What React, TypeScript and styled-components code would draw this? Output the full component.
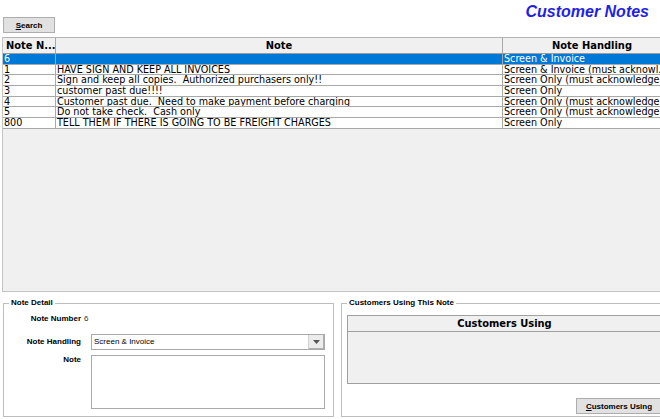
import React from "react";
import styled, { createGlobalStyle } from "styled-components";

type Note = {
  num: string;
  text: string;
  handling: string;
};

const notes: Note[] = [
  { num: "6", text: "", handling: "Screen & Invoice" },
  { num: "1", text: "HAVE SIGN AND KEEP ALL INVOICES", handling: "Screen & Invoice (must acknowl." },
  { num: "2", text: "Sign and keep all copies.  Authorized purchasers only!!", handling: "Screen Only (must acknowledge)" },
  { num: "3", text: "customer past due!!!!", handling: "Screen Only" },
  { num: "4", text: "Customer past due.  Need to make payment before charging", handling: "Screen Only (must acknowledge)" },
  { num: "5", text: "Do not take check.  Cash only", handling: "Screen Only (must acknowledge)" },
  { num: "800", text: "TELL THEM IF THERE IS GOING TO BE FREIGHT CHARGES", handling: "Screen Only" },
];

const GlobalStyle = createGlobalStyle`
  html, body {
    margin: 0;
    padding: 0;
    background: #ffffff;
  }
  body {
    font-family: "Liberation Sans", Arial, sans-serif;
  }
`;

const Screen = styled.div`
  width: 660px;
  height: 419px;
  overflow: hidden;
  background: #ffffff;
  display: flex;
  flex-direction: column;
`;

const TopBar = styled.div`
  display: flex;
  justify-content: space-between;
  align-items: flex-start;
  height: 37px;
  flex-shrink: 0;
`;

const ActionButton = styled.button<{ $width: number }>`
  width: ${(p) => p.$width}px;
  height: 16px;
  padding: 0;
  background: #e1e1e1;
  border: 1px solid #adadad;
  font: bold 8px "Liberation Sans", Arial, sans-serif;
  color: #000;
  flex-shrink: 0;
`;

const SearchButton = styled(ActionButton)`
  margin: 17px 0 0 3px;
`;

const Title = styled.div`
  margin: 3px 11px 0 0;
  font: italic bold 16px "Liberation Sans", Arial, sans-serif;
  color: #1f1fe8;
`;

const Grid = styled.div`
  margin-left: 2px;
  width: 680px;
  height: 255px;
  flex-shrink: 0;
  background: #f0f0f0;
  border-left: 1px solid #c4c4c4;
  border-bottom: 1px solid #c4c4c4;
  box-sizing: border-box;
  overflow: hidden;
`;

const columns = "53px 447px 1fr";

const HeaderRow = styled.div`
  display: grid;
  grid-template-columns: ${columns};
  height: 17px;
  box-sizing: border-box;
  border-top: 1px solid #b4b4b4;
  border-bottom: 1px solid #9c9c9c;
  background: #f0f0f0;
`;

const HeaderCell = styled.div<{ $align?: string }>`
  font: bold 11px "DejaVu Sans Condensed", "DejaVu Sans", sans-serif;
  line-height: 15px;
  text-align: ${(p) => p.$align || "center"};
  padding-left: ${(p) => (p.$align === "left" ? "3px" : "0")};
  border-right: 1px solid #a8a8a8;
  white-space: nowrap;
  overflow: hidden;
  color: #000;
`;

const Row = styled.div<{ $selected?: boolean }>`
  display: grid;
  grid-template-columns: ${columns};
  height: 10.7px;
  box-sizing: border-box;
  background: ${(p) => (p.$selected ? "#0078d7" : "#ffffff")};
  color: ${(p) => (p.$selected ? "#ffffff" : "#000000")};
  border-bottom: 1px solid #a8a8a8;
`;

const Cell = styled.div`
  font: 10.7px "DejaVu Sans Condensed", "DejaVu Sans", sans-serif;
  line-height: 10px;
  padding-left: 1px;
  border-right: 1px solid #a8a8a8;
  white-space: pre;
  overflow: hidden;
`;

const Panels = styled.div`
  display: flex;
  margin-top: 11px;
  height: 114px;
  flex-shrink: 0;
`;

const Panel = styled.div<{ $width: number; $left: number }>`
  position: relative;
  width: ${(p) => p.$width}px;
  margin-left: ${(p) => p.$left}px;
  box-sizing: border-box;
  border: 1px solid #bdbdbd;
  flex-shrink: 0;
  display: flex;
  flex-direction: column;
`;

const Legend = styled.span`
  position: absolute;
  top: -6px;
  left: 5px;
  padding: 0 2px;
  background: #ffffff;
  font: bold 8px "Liberation Sans", Arial, sans-serif;
  line-height: 10px;
  color: #000;
`;

const DetailForm = styled.div`
  display: flex;
  flex-direction: column;
  padding-top: 10px;
`;

const FormRow = styled.div<{ $height: number; $top: number; $center?: boolean }>`
  display: flex;
  align-items: ${(p) => (p.$center ? "center" : "flex-start")};
  gap: 10px;
  height: ${(p) => p.$height}px;
  margin-top: ${(p) => p.$top}px;
`;

const Label = styled.div`
  width: 77px;
  flex-shrink: 0;
  font: bold 8px "Liberation Sans", Arial, sans-serif;
  line-height: 10px;
  text-align: right;
  color: #000;
`;

const Value = styled.div`
  font: 8px "Liberation Sans", Arial, sans-serif;
  line-height: 10px;
  color: #333;
  margin-left: -7px;
`;

const Select = styled.div`
  display: flex;
  align-items: stretch;
  width: 234px;
  height: 16px;
  background: #ffffff;
  border: 1px solid #a9a9a9;
  box-sizing: border-box;
`;

const SelectText = styled.div`
  flex: 1;
  font: 8px "Liberation Sans", Arial, sans-serif;
  line-height: 14px;
  padding-left: 2px;
  color: #000;
`;

const SelectArrow = styled.div`
  width: 15px;
  background: #ececec;
  border-left: 1px solid #d0d0d0;
  box-shadow: inset -1px -1px 0 #b0b0b0;
  display: flex;
  align-items: center;
  justify-content: center;
`;

const TextArea = styled.div`
  width: 234px;
  height: 54px;
  background: #ffffff;
  border: 1px solid #a9a9a9;
  box-sizing: border-box;
`;

const CustomersBody = styled.div`
  display: flex;
  flex-direction: column;
  padding: 11px 5px 0 5px;
`;

const CustomersTable = styled.div`
  height: 69px;
  background: #f0f0f0;
  border: 1px solid #a0a0a0;
  box-sizing: border-box;
  display: flex;
  flex-direction: column;
`;

const CustomersHeader = styled.div`
  height: 16px;
  box-sizing: border-box;
  border-bottom: 1px solid #a0a0a0;
  font: bold 11px "DejaVu Sans Condensed", "DejaVu Sans", sans-serif;
  line-height: 15px;
  text-align: center;
  color: #000;
`;

const CustomersButton = styled(ActionButton)`
  align-self: flex-end;
  margin-top: 14px;
`;

const App = () => {
  return (
    <>
      <GlobalStyle />
      <Screen>
        <TopBar>
          <SearchButton $width={52}>
            <u>S</u>earch
          </SearchButton>
          <Title>Customer Notes</Title>
        </TopBar>

        <Grid>
          <HeaderRow>
            <HeaderCell $align="left">Note N...</HeaderCell>
            <HeaderCell>Note</HeaderCell>
            <HeaderCell>Note Handling</HeaderCell>
          </HeaderRow>
          {notes.map((n, i) => (
            <Row key={n.num} $selected={i === 0}>
              <Cell>{n.num}</Cell>
              <Cell>{n.text}</Cell>
              <Cell>{n.handling}</Cell>
            </Row>
          ))}
        </Grid>

        <Panels>
          <Panel $width={331} $left={3}>
            <Legend>Note Detail</Legend>
            <DetailForm>
              <FormRow $height={10} $top={0}>
                <Label>Note Number</Label>
                <Value>6</Value>
              </FormRow>
              <FormRow $height={16} $top={10} $center>
                <Label>Note Handling</Label>
                <Select>
                  <SelectText>Screen &amp; Invoice</SelectText>
                  <SelectArrow>
                    <svg width="7" height="4" viewBox="0 0 7 4">
                      <path d="M0 0 L7 0 L3.5 4 Z" fill="#555" />
                    </svg>
                  </SelectArrow>
                </Select>
              </FormRow>
              <FormRow $height={54} $top={5}>
                <Label>Note</Label>
                <TextArea />
              </FormRow>
            </DetailForm>
          </Panel>

          <Panel $width={327} $left={7}>
            <Legend>Customers Using This Note</Legend>
            <CustomersBody>
              <CustomersTable>
                <CustomersHeader>Customers Using</CustomersHeader>
              </CustomersTable>
              <CustomersButton $width={86}>
                <u>C</u>ustomers Using
              </CustomersButton>
            </CustomersBody>
          </Panel>
        </Panels>
      </Screen>
    </>
  );
};

export default App;
